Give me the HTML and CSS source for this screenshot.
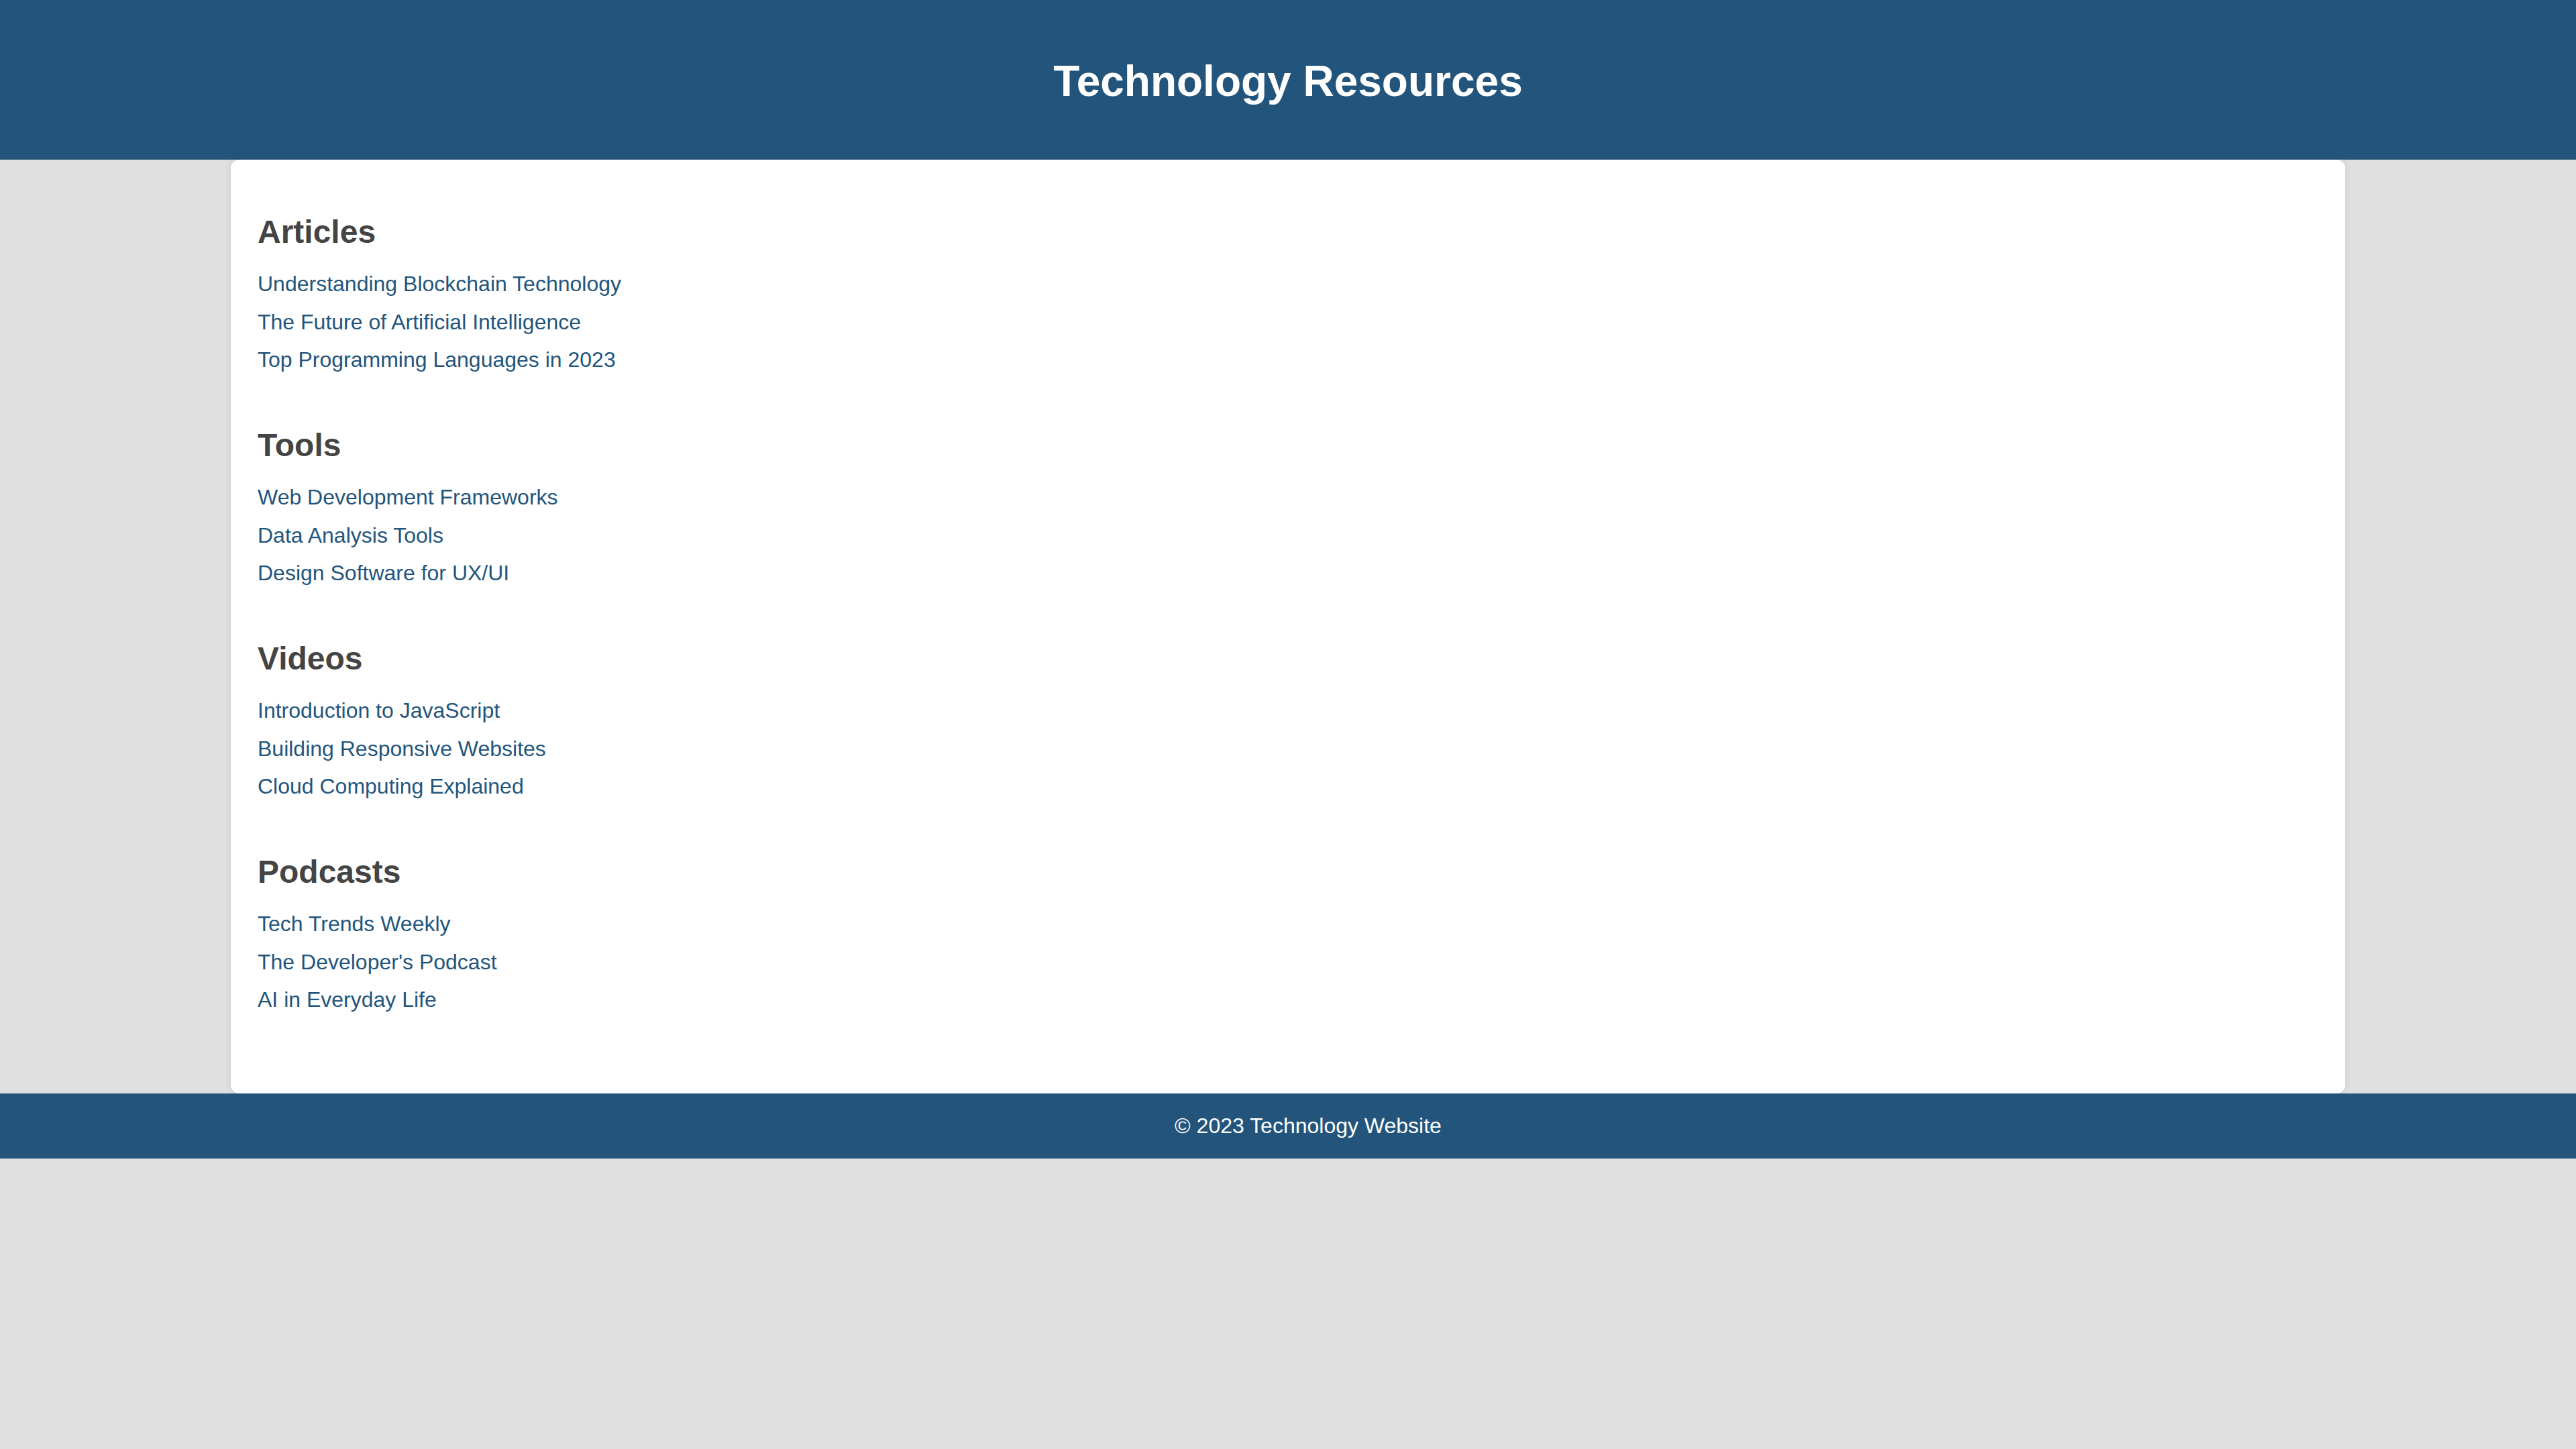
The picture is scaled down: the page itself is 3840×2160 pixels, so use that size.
FILE: index.html
```html
<!DOCTYPE html>
<html lang="en">
<head>
<meta charset="utf-8">
<title>Technology Resources</title>
<link rel="stylesheet" href="styles.css">
</head>
<body>
<header class="site-header">
  <h1 class="site-title">Technology Resources</h1>
</header>
<main class="card">
  <section class="group">
    <h2 class="group-title">Articles</h2>
    <ul class="links">
      <li><a href="#">Understanding Blockchain Technology</a></li>
      <li><a href="#">The Future of Artificial Intelligence</a></li>
      <li><a href="#">Top Programming Languages in 2023</a></li>
    </ul>
  </section>
  <section class="group">
    <h2 class="group-title">Tools</h2>
    <ul class="links">
      <li><a href="#">Web Development Frameworks</a></li>
      <li><a href="#">Data Analysis Tools</a></li>
      <li><a href="#">Design Software for UX/UI</a></li>
    </ul>
  </section>
  <section class="group">
    <h2 class="group-title">Videos</h2>
    <ul class="links">
      <li><a href="#">Introduction to JavaScript</a></li>
      <li><a href="#">Building Responsive Websites</a></li>
      <li><a href="#">Cloud Computing Explained</a></li>
    </ul>
  </section>
  <section class="group">
    <h2 class="group-title">Podcasts</h2>
    <ul class="links">
      <li><a href="#">Tech Trends Weekly</a></li>
      <li><a href="#">The Developer's Podcast</a></li>
      <li><a href="#">AI in Everyday Life</a></li>
    </ul>
  </section>
</main>
<footer class="site-footer">
  <p class="footer-text">&copy; 2023 Technology Website</p>
</footer>
</body>
</html>
```
FILE: styles.css
```css
html, body {
  overflow-x: hidden;
}
body {
  margin: 0;
  background: #e0e0e0;
  font-family: "Liberation Sans", Arial, sans-serif;
  color: #444;
}
.site-header {
  background: #23557c;
  color: #fff;
  text-align: center;
  padding: 40px 0;
}
.site-title {
  margin: 44px 0 40px;
  font-size: 64px;
  font-weight: bold;
  line-height: normal;
}
.card {
  display: block;
  width: 80%;
  margin: 0 auto;
  padding: 40px 40px 80px;
  background: #fff;
  border-radius: 13px;
  box-shadow: 0 0 12px rgba(0, 0, 0, 0.1);
}
.group {
  display: flow-root;
  margin-bottom: 41px;
}
.group-title {
  margin: 40px 0 32px;
  font-size: 48px;
  line-height: 55px;
  font-weight: bold;
  color: #444;
}
.links {
  list-style: none;
  margin: 0;
  padding: 0;
}
.links li {
  font-size: 32px;
  line-height: 37px;
}
.links li + li {
  margin-top: 19.5px;
}
.links a {
  color: #23557c;
  text-decoration: none;
}
.site-footer {
  width: 100%;
  padding: 30px;
  background: #23557c;
  color: #fff;
  text-align: center;
}
.footer-text {
  margin: 0;
  font-size: 32px;
  line-height: normal;
}
```
